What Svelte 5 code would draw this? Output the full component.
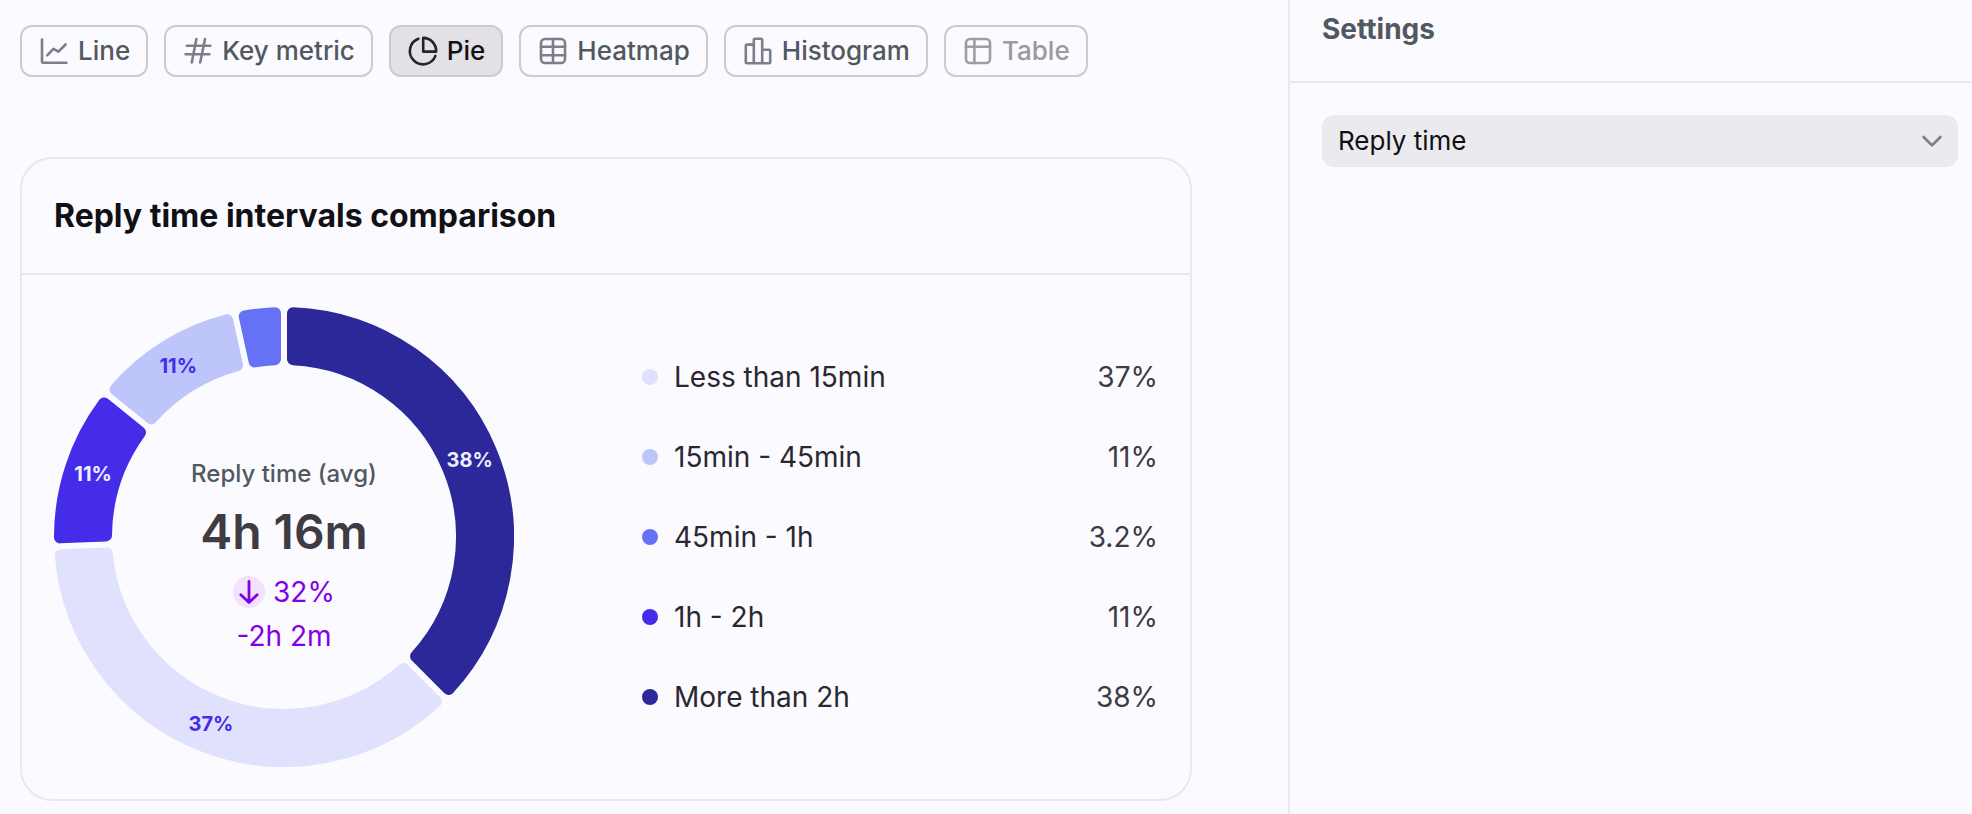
<script>
  const tabs = [
    { id: 'line', label: 'Line' },
    { id: 'metric', label: 'Key metric' },
    { id: 'pie', label: 'Pie' },
    { id: 'heatmap', label: 'Heatmap' },
    { id: 'histogram', label: 'Histogram' },
    { id: 'table', label: 'Table', disabled: true }
  ];
  let active = $state('pie');
  let metric = $state('reply');

  const legend = [
    { label: 'Less than 15min', value: '37%', color: '#e0e2fd' },
    { label: '15min - 45min', value: '11%', color: '#bdc5fb' },
    { label: '45min - 1h', value: '3.2%', color: '#6672f6' },
    { label: '1h - 2h', value: '11%', color: '#442ce9' },
    { label: 'More than 2h', value: '38%', color: '#2d2899' }
  ];

  // Clockwise from twelve o'clock, in degrees
  const slices = [
    { from: 0, to: 135, color: '#2d2899', label: '38%', ink: '#eeeffe' },
    { from: 135, to: 267.6, color: '#e0e2fd', label: '37%', ink: '#442ce9' },
    { from: 267.6, to: 308.9, color: '#442ce9', label: '11%', ink: '#eeeffe' },
    { from: 308.9, to: 347.6, color: '#bdc5fb', label: '11%', ink: '#442ce9' },
    { from: 347.6, to: 360, color: '#6672f6', label: '', ink: '#ffffff' }
  ];

  const C = 230;
  const OUTER = 230;
  const INNER = 172;
  const GAP = 6;
  const CORNER = 6;

  const rad = (deg) => (deg * Math.PI) / 180;
  const point = (r, a) => `${(C + r * Math.sin(a)).toFixed(2)} ${(C - r * Math.cos(a)).toFixed(2)}`;

  // The outline is inset by the corner radius; a round-joined stroke of the same colour fills it back out
  function slicePath(from, to) {
    const ro = OUTER - CORNER;
    const ri = INNER + CORNER;
    const side = GAP / 2 + CORNER;
    const po = Math.asin(side / ro);
    const pi = Math.asin(side / ri);
    const a = rad(from);
    const b = rad(to);
    const large = to - from > 180 ? 1 : 0;
    return `M${point(ro, a + po)}A${ro} ${ro} 0 ${large} 1 ${point(ro, b - po)}L${point(ri, b - pi)}A${ri} ${ri} 0 ${large} 0 ${point(ri, a + pi)}Z`;
  }

  function labelAt(s) {
    const a = rad((s.from + s.to) / 2);
    const r = (OUTER + INNER) / 2;
    return { x: C + r * Math.sin(a), y: C - r * Math.cos(a) };
  }
</script>

<div class="page">
  <main>
    <div class="tabs" role="group" aria-label="Chart type">
      {#each tabs as t}
        <button
          type="button"
          class="tab"
          class:active={active === t.id}
          disabled={t.disabled}
          aria-pressed={active === t.id}
          onclick={() => (active = t.id)}
        >
          <svg viewBox="0 0 32 32" aria-hidden="true">
            {#if t.id === 'line'}
              <path d="M4 4.5V26.8a1 1 0 0 0 1 1H28.4M9.2 20.4l6.2-6.6 5 2.9 7.2-7.2" />
            {:else if t.id === 'metric'}
              <path d="M4.8 10.8H28.4M3.6 19.2H27.4M14.4 4L9.8 27.4M23 4L18.2 27.4" />
            {:else if t.id === 'pie'}
              <path d="M11.4 3.8A13.2 13.2 0 1 0 28.4 20.9" />
              <path d="M16.2 2.9V16.6H29.1A13 13 0 0 0 16.2 2.9Z" />
            {:else if t.id === 'heatmap'}
              <rect x="4" y="4" width="24" height="24" rx="4" />
              <path d="M16 4v24M4 11.8h24M4 20.2h24" />
            {:else if t.id === 'histogram'}
              <path d="M11.8 9.6H5a1.2 1.2 0 0 0-1.2 1.2V27a1.2 1.2 0 0 0 1.2 1.2H27a1.2 1.2 0 0 0 1.2-1.2V16a1.2 1.2 0 0 0-1.2-1.2H20.2" />
              <path d="M11.8 28V5A1.2 1.2 0 0 1 13 3.8h6A1.2 1.2 0 0 1 20.2 5V28" />
            {:else}
              <rect x="4" y="4" width="24" height="24" rx="4" />
              <path d="M12.4 4v24M4 11.8h24" />
            {/if}
          </svg>
          <span>{t.label}</span>
        </button>
      {/each}
    </div>

    <section class="card">
      <header><h2>Reply time intervals comparison</h2></header>
      <div class="body">
        <div class="donut">
          <svg viewBox="0 0 460 460" role="img" aria-label="Reply time intervals comparison">
            {#each slices as s}
              <path
                d={slicePath(s.from, s.to)}
                fill={s.color}
                stroke={s.color}
                stroke-width={CORNER * 2}
                stroke-linejoin="round"
              />
              {#if s.label}
                <text x={labelAt(s).x} y={labelAt(s).y + 7} fill={s.ink}>{s.label}</text>
              {/if}
            {/each}
          </svg>
          <div class="summary">
            <span class="caption">Reply time (avg)</span>
            <strong>4h 16m</strong>
            <span class="delta">
              <svg viewBox="0 0 32 32" aria-hidden="true">
                <circle cx="16" cy="16" r="16" />
                <path d="M16 5.5V26.5M7.8 18.7L16 26.5L24.2 18.7" />
              </svg>
              32%
            </span>
            <span class="delta">-2h 2m</span>
          </div>
        </div>
        <ul class="legend">
          {#each legend as l}
            <li>
              <i style:background={l.color}></i>
              <span class="name">{l.label}</span>
              <span class="value">{l.value}</span>
            </li>
          {/each}
        </ul>
      </div>
    </section>
  </main>

  <aside>
    <header><h3>Settings</h3></header>
    <div class="field">
      <select bind:value={metric} aria-label="Metric">
        <option value="reply">Reply time</option>
      </select>
      <svg viewBox="0 0 32 32" aria-hidden="true"><path d="M7.6 12L16 20.4L24.4 12" /></svg>
    </div>
  </aside>
</div>

<style>
  :global(body) {
    background: #fbfaff;
  }
  .page {
    display: flex;
    min-height: 100vh;
    font-family: Inter, 'Liberation Sans', sans-serif;
    font-size: 28px;
    line-height: 40px;
    color: #2a2731;
    background: #fbfaff;
  }
  .page * {
    box-sizing: border-box;
  }
  main {
    flex: 1;
    min-width: 0;
    padding: 25px 96px 12px 20px;
  }
  .tabs {
    display: flex;
    flex-wrap: wrap;
    gap: 16px;
  }
  .tab {
    display: flex;
    align-items: center;
    gap: 8px;
    height: 52px;
    padding: 0 16px;
    border: 2px solid #cdcbd1;
    border-radius: 12px;
    background: none;
    font: inherit;
    font-size: 26px;
    font-weight: 500;
    color: #51585f;
    cursor: pointer;
  }
  .tab svg {
    width: 32px;
    height: 32px;
    fill: none;
    stroke: #7c7e89;
    stroke-width: 2.6;
    stroke-linecap: round;
    stroke-linejoin: round;
  }
  .tab.active {
    background: #e3e1e6;
    color: #111014;
  }
  .tab.active svg {
    stroke: #24222b;
  }
  .tab:disabled {
    color: #989ba0;
    cursor: default;
  }
  .tab:disabled svg {
    stroke: #9c9ea6;
  }
  .card {
    margin-top: 80px;
    border: 2px solid #e9e8ed;
    border-radius: 32px;
  }
  .card header {
    padding: 37px 32px;
    border-bottom: 2px solid #e9e8ed;
  }
  h2,
  h3 {
    margin: 0;
    font-weight: 700;
  }
  h2 {
    font-size: 32px;
    color: #111014;
  }
  .body {
    display: flex;
    align-items: center;
    gap: 128px;
    padding: 32px;
  }
  .donut {
    display: grid;
    flex: none;
    width: 460px;
  }
  .donut > * {
    grid-area: 1 / 1;
  }
  .donut > svg {
    display: block;
    width: 100%;
  }
  .donut text {
    font-size: 20px;
    font-weight: 700;
    text-anchor: middle;
  }
  .summary {
    display: flex;
    flex-direction: column;
    align-items: center;
    justify-content: center;
    padding-top: 38px;
  }
  .caption {
    font-size: 24px;
    font-weight: 500;
    color: #51585f;
  }
  strong {
    margin: 8px 0;
    font-size: 48px;
    font-weight: 600;
    line-height: 60px;
    color: #3e3b44;
  }
  .delta {
    display: flex;
    align-items: center;
    gap: 8px;
    line-height: 44px;
    color: #8200e6;
  }
  .delta svg {
    width: 32px;
    height: 32px;
    fill: none;
    stroke: #8200e6;
    stroke-width: 2.8;
    stroke-linecap: round;
    stroke-linejoin: round;
  }
  .delta circle {
    fill: #f2e2fd;
    stroke: none;
  }
  .legend {
    display: flex;
    flex: 1;
    flex-direction: column;
    gap: 40px;
    margin: 0;
    padding: 0;
    list-style: none;
  }
  .legend li {
    display: flex;
    align-items: center;
    gap: 16px;
  }
  .legend i {
    width: 16px;
    height: 16px;
    border-radius: 50%;
  }
  .name {
    flex: 1;
  }
  .value {
    color: #3e3b44;
  }
  aside {
    width: 684px;
    border-left: 2px solid #e9e8ed;
    box-sizing: border-box;
  }
  aside header {
    padding: 9px 32px 32px;
    border-bottom: 2px solid #e9e8ed;
  }
  h3 {
    font-size: 28px;
    color: #51585f;
  }
  .field {
    display: grid;
    align-items: center;
    margin: 32px 14px 0 32px;
  }
  .field > * {
    grid-area: 1 / 1;
  }
  select {
    appearance: none;
    width: 100%;
    height: 52px;
    padding: 0 48px 0 16px;
    border: 0;
    border-radius: 12px;
    background: #ebeaee;
    font: inherit;
    font-size: 26px;
    line-height: 40px;
    color: #111014;
  }
  .field svg {
    justify-self: end;
    width: 32px;
    height: 32px;
    margin-right: 10px;
    fill: none;
    stroke: #7c7e89;
    stroke-width: 2.6;
    stroke-linecap: round;
    stroke-linejoin: round;
    pointer-events: none;
  }
</style>
